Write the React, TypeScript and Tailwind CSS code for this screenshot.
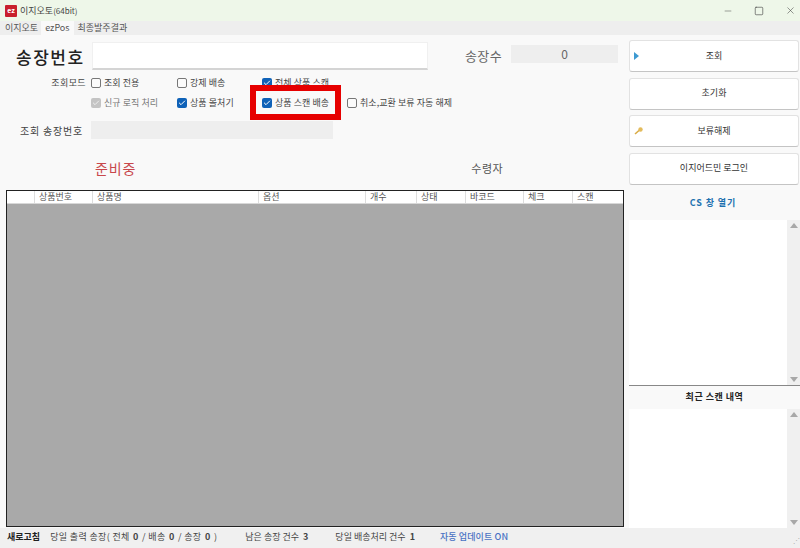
import { Minus, Square, X, Check } from "lucide-react";

const COLS = [
  { l: "", w: "w-[28px]" },
  { l: "상품번호", w: "w-[58px]" },
  { l: "상품명", w: "w-[166px]" },
  { l: "옵션", w: "w-[107px]" },
  { l: "개수", w: "w-[51px]" },
  { l: "상태", w: "w-[49px]" },
  { l: "바코드", w: "w-[58px]" },
  { l: "체크", w: "w-[49px]" },
  { l: "스캔", w: "flex-1" },
];

function Box({ label, on, off }: { label: string; on?: boolean; off?: boolean }) {
  return (
    <div className="flex h-[20px] items-center gap-[3px] whitespace-nowrap text-[9px] tracking-[0.05px] text-[#444]">
      {off ? (
        <span className="flex h-[10px] w-[10px] items-center justify-center rounded-[2px] bg-[#c4c4c4]">
          <Check size={8} strokeWidth={3} className="text-[#eee]" />
        </span>
      ) : on ? (
        <span className="flex h-[10px] w-[10px] items-center justify-center rounded-[2px] bg-[#0f62b8]">
          <Check size={8} strokeWidth={3} className="text-white" />
        </span>
      ) : (
        <span className="h-[10px] w-[10px] rounded-[2px] border border-[#777] bg-[#fbfbfb]" />
      )}
      <span className={off ? "text-[#777]" : ""}>{label}</span>
    </div>
  );
}

function Btn({ label, icon }: { label: string; icon?: React.ReactNode }) {
  return (
    <button
      type="button"
      className="relative flex h-[32px] w-[170px] items-center justify-center rounded-[3px] border border-[#e2e2e2] border-b-[#c4c4c4] bg-white pb-[1px] text-[9px] text-[#333]"
    >
      {icon && <span className="absolute left-[4px] top-1/2 -translate-y-1/2">{icon}</span>}
      {label}
    </button>
  );
}

function ScrollBox({ h }: { h: string }) {
  return (
    <div className={`flex ${h} w-full`}>
      <div className="flex-1 bg-white" />
      <div className="flex w-[13px] flex-col items-center justify-between bg-[#f0f0f0] py-[3px]">
        <span className="h-0 w-0 border-x-[4px] border-b-[5px] border-x-transparent border-b-[#a8a8a8]" />
        <span className="h-0 w-0 border-x-[4px] border-t-[5px] border-x-transparent border-t-[#a8a8a8]" />
      </div>
    </div>
  );
}

export default function App() {
  return (
    <div className="flex h-[548px] w-[800px] flex-col overflow-hidden bg-[#f9f9f9] font-['Noto_Sans_CJK_KR','Noto_Sans',sans-serif] text-[#444]">
      {/* title bar */}
      <div className="flex h-[21px] shrink-0 items-center bg-[#eef7e9] pl-[5px]">
        <span className="flex h-[12px] w-[12px] items-center justify-center rounded-[1px] bg-[#c8202c] text-[7px] font-bold leading-none text-white">
          ez
        </span>
        <span className="ml-[3px] text-[9px] text-[#444]">
          이지오토<span className="text-[8px]">(64bit)</span>
        </span>
        <div className="ml-auto flex items-center gap-[21px] pr-[4px] text-[#444]">
          <Minus size={10} strokeWidth={1.2} />
          <Square size={10} strokeWidth={1.5} />
          <X size={11} strokeWidth={1.2} />
        </div>
      </div>

      {/* tabs */}
      <div className="flex h-[14px] shrink-0 items-center bg-[#eeeeee] text-[9px] text-[#555]">
        <span className="pl-[5px] pr-[3px]">이지오토</span>
        <span className="flex h-full items-center bg-[#f9f9f9] px-[4px]">ezPos</span>
        <span className="pl-[4px]">최종발주결과</span>
      </div>

      {/* body */}
      <div className="flex min-h-0 flex-1">
        <div className="relative flex w-[628px] shrink-0 flex-col pl-[6px] pr-[4px]">
          <div className="mt-[7px] flex h-[28px] items-center">
            <span className="w-[86px] whitespace-nowrap pl-[10px] text-[17px] font-medium leading-none tracking-[1.5px] text-[#222]">
              송장번호
            </span>
            <div className="h-[28px] w-[336px] border border-b-2 border-[#f0f0f0] border-b-[#d4d4d4] bg-white" />
            <span className="ml-[37px] w-[46px] text-[13px] tracking-[0.4px] text-[#666]">송장수</span>
            <div className="mt-[3px] flex h-[18px] w-[107px] items-center justify-center self-start bg-[#eeeeee] text-[12px] text-[#666]">
              0
            </div>
          </div>

          <div className="mt-[3px] grid grid-cols-[85px_86px_85px_85px_1fr]">
            <span className="flex h-[20px] items-center justify-end pr-[5px] text-[9px] tracking-[0.4px]">
              조회모드
            </span>
            <Box label="조회 전용" />
            <Box label="강제 배송" />
            <Box label="전체 상품 스캔" on />
            <span />
            <span />
            <Box label="신규 로직 처리" off />
            <Box label="상품 몰처기" on />
            <Box label="상품 스캔 배송" on />
            <Box label="취소,교환 보류 자동 해제" />
          </div>

          <div className="mt-[8px] flex h-[18px] items-center">
            <span className="w-[85px] whitespace-nowrap pl-[14px] text-[10px] tracking-[0.8px]">조회 송장번호</span>
            <div className="h-[18px] w-[242px] bg-[#eeeeee]" />
          </div>

          <div className="mt-[19px] flex h-[32px] items-start">
            <span className="ml-[89px] text-[14px] leading-[20px] tracking-[0.9px] text-[#c8474b]">준비중</span>
            <span className="ml-[335px] text-[11px] leading-[20px] tracking-[0.5px] text-[#555]">수령자</span>
          </div>

          <div className="flex h-[337px] w-[618px] flex-col border border-[#222] bg-[#a9a9a9]">
            <div className="flex h-[13px] shrink-0 border-b border-[#d8d8d8] bg-white text-[9px] leading-[12px] text-[#555]">
              {COLS.map((c, i) => (
                <div key={i} className={`${c.w} border-r border-[#ddd] pl-[4px] last:border-r-0`}>
                  {c.l}
                </div>
              ))}
            </div>
          </div>

          {/* red highlight over the checkbox */}
          <div className="absolute left-[250px] top-[50px] h-[35px] w-[91px] border-[6px] border-[#e60000]" />
        </div>

        {/* right column */}
        <div className="flex min-w-0 flex-1 flex-col pl-[1px]">
          <div className="mt-[5px] flex flex-col gap-[5.5px]">
            <Btn
              label="조회"
              icon={
                <span className="block h-0 w-0 border-y-[4px] border-l-[5px] border-y-transparent border-l-[#3d9ad1]" />
              }
            />
            <Btn label="초기화" />
            <Btn
              label="보류해제"
              icon={
                <svg width="9" height="8" viewBox="0 0 9 8">
                  <circle cx="6.5" cy="2.5" r="2.2" fill="#e3bb5c" />
                  <path d="M5 3.5 1 7" stroke="#d9ab45" strokeWidth="1.6" />
                </svg>
              }
            />
            <Btn label="이지어드민 로그인" />
          </div>
          <div className="mt-[11px] h-[14px] pr-[3px] text-center text-[9px] font-bold leading-[14px] tracking-[0.9px] text-[#1f72b0]">
            CS 창 열기
          </div>
          <div className="mt-[10px]">
            <ScrollBox h="h-[165px]" />
          </div>
          <div className="h-px bg-[#888]" />
          <div className="flex h-[23px] items-center justify-center text-[9px] font-bold tracking-[0.5px] text-[#222]">
            최근 스캔 내역
          </div>
          <ScrollBox h="h-[119px]" />
        </div>
      </div>

      {/* status bar */}
      <div className="relative flex h-[20px] shrink-0 items-center bg-[#f0f0f0] pb-[2px] pl-[7px] text-[9px] text-[#444]">
        <span className="font-bold text-[#222]">새로고침</span>
        <span className="ml-[10px] tracking-[0.35px]">
          당일 출력 송장( 전체 <b className="mx-[1px]">0</b> / 배송 <b className="mx-[1px]">0</b> / 송장{" "}
          <b className="mx-[1px]">0</b> )
        </span>
        <span className="ml-[28px]">
          남은 송장 건수 <b className="ml-[2px]">3</b>
        </span>
        <span className="ml-[27px]">
          당일 배송처리 건수 <b className="ml-[2px]">1</b>
        </span>
        <span className="ml-[25px] tracking-[0.1px] font-medium text-[#4a73c4]">자동 업데이트 ON</span>
        <span className="absolute bottom-[4px] right-[1px] text-[7px] leading-none tracking-[-1px] text-[#aaa]">⋰</span>
      </div>
    </div>
  );
}
